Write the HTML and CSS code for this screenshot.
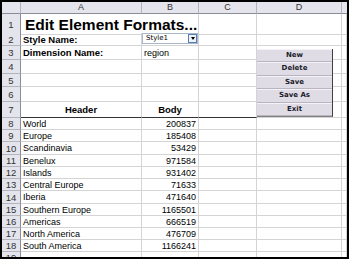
FILE: index.html
```html
<!DOCTYPE html>
<html>
<head>
    <meta http-equiv="Content-Type" content="text/html; charset=UTF-8">
    <title>Edit Element Formats</title>
    <link rel="stylesheet" href="styles.css">
</head>
<body>
    <div class="sheet">
        <div class="row colhead">
            <div class="corner"></div>
            <div class="ch">A</div>
            <div class="ch">B</div>
            <div class="ch">C</div>
            <div class="ch">D</div>
            <div class="ch"></div>
        </div>
        <div class="row r1">
            <div class="rh">1</div>
            <div class="cell title">Edit Element Formats...</div>
            <div class="cell"></div>
            <div class="cell"></div>
            <div class="cell"></div>
        </div>
        <div class="row r2">
            <div class="rh">2</div>
            <div class="cell label">Style Name:</div>
            <div class="cell">
                <div class="combo">
                    <span class="combo-text">Style1</span>
                    <span class="combo-btn"><span class="tri"></span></span>
                </div>
            </div>
            <div class="cell"></div>
            <div class="cell"></div>
            <div class="cell"></div>
        </div>
        <div class="row r3">
            <div class="rh">3</div>
            <div class="cell label">Dimension Name:</div>
            <div class="cell">region</div>
            <div class="cell"></div>
            <div class="cell"></div>
            <div class="cell"></div>
        </div>
        <div class="row r4">
            <div class="rh">4</div>
            <div class="cell"></div><div class="cell"></div><div class="cell"></div><div class="cell"></div><div class="cell"></div>
        </div>
        <div class="row r5">
            <div class="rh">5</div>
            <div class="cell"></div><div class="cell"></div><div class="cell"></div><div class="cell"></div><div class="cell"></div>
        </div>
        <div class="row r6">
            <div class="rh">6</div>
            <div class="cell"></div><div class="cell"></div><div class="cell"></div><div class="cell"></div><div class="cell"></div>
        </div>
        <div class="row r7">
            <div class="rh">7</div>
            <div class="cell head">Header</div>
            <div class="cell head">Body</div>
            <div class="cell head"></div>
            <div class="cell"></div>
            <div class="cell"></div>
        </div>
        <div class="row data">
            <div class="rh">8</div>
            <div class="cell">World</div><div class="cell num">200837</div><div class="cell"></div><div class="cell"></div><div class="cell"></div>
        </div>
        <div class="row data">
            <div class="rh">9</div>
            <div class="cell">Europe</div><div class="cell num">185408</div><div class="cell"></div><div class="cell"></div><div class="cell"></div>
        </div>
        <div class="row data tall">
            <div class="rh">10</div>
            <div class="cell">Scandinavia</div><div class="cell num">53429</div><div class="cell"></div><div class="cell"></div><div class="cell"></div>
        </div>
        <div class="row data">
            <div class="rh">11</div>
            <div class="cell">Benelux</div><div class="cell num">971584</div><div class="cell"></div><div class="cell"></div><div class="cell"></div>
        </div>
        <div class="row data">
            <div class="rh">12</div>
            <div class="cell">Islands</div><div class="cell num">931402</div><div class="cell"></div><div class="cell"></div><div class="cell"></div>
        </div>
        <div class="row data">
            <div class="rh">13</div>
            <div class="cell">Central Europe</div><div class="cell num">71633</div><div class="cell"></div><div class="cell"></div><div class="cell"></div>
        </div>
        <div class="row data tall">
            <div class="rh">14</div>
            <div class="cell">Iberia</div><div class="cell num">471640</div><div class="cell"></div><div class="cell"></div><div class="cell"></div>
        </div>
        <div class="row data">
            <div class="rh">15</div>
            <div class="cell">Southern Europe</div><div class="cell num">1165501</div><div class="cell"></div><div class="cell"></div><div class="cell"></div>
        </div>
        <div class="row data">
            <div class="rh">16</div>
            <div class="cell">Americas</div><div class="cell num">666519</div><div class="cell"></div><div class="cell"></div><div class="cell"></div>
        </div>
        <div class="row data">
            <div class="rh">17</div>
            <div class="cell">North America</div><div class="cell num">476709</div><div class="cell"></div><div class="cell"></div><div class="cell"></div>
        </div>
        <div class="row data">
            <div class="rh">18</div>
            <div class="cell">South America</div><div class="cell num">1166241</div><div class="cell"></div><div class="cell"></div><div class="cell"></div>
        </div>
        <div class="row data">
            <div class="rh">19</div>
            <div class="cell"></div><div class="cell"></div><div class="cell"></div><div class="cell"></div><div class="cell"></div>
        </div>

        <div class="buttons">
            <div class="btn">New</div>
            <div class="btn">Delete</div>
            <div class="btn">Save</div>
            <div class="btn">Save As</div>
            <div class="btn">Exit</div>
        </div>
    </div>
</body>
</html>
```

FILE: styles.css
```css
body {
    margin: 0;
    background: #fff;
    font-family: "Liberation Sans", Arial, sans-serif;
}

.sheet {
    position: relative;
    width: 345px;
    height: 255px;
    border: 2px solid #000;
    overflow: hidden;
    font-size: 9px;
    color: #000;
}

.row {
    display: grid;
    grid-template-columns: 19px 121px 57px 58px 85px 1fr;
    height: 12px;
}

.row > div {
    box-sizing: border-box;
    border-right: 1px solid #d4d4d4;
    border-bottom: 1px solid #d4d4d4;
    white-space: nowrap;
    overflow: hidden;
}

/* column letters */
.colhead > div {
    background: #e4e4ec;
    border-right: 1px solid #b4b4bc;
    border-bottom: 1px solid #8c8c98;
    color: #333;
    text-align: center;
    line-height: 11px;
}

.colhead .ch:last-child {
    border-right: none;
}

/* row numbers */
.rh {
    background: #e4e4ec;
    text-align: center;
    color: #333;
    font-size: 9.5px;
    display: flex;
    align-items: center;
    justify-content: center;
}

.row > .rh {
    border-right: 1px solid #8c8c98;
    border-bottom: 1px solid #b4b4bc;
}

.cell {
    padding: 0 2px;
    display: flex;
    align-items: center;
}

.r1 { height: 19px; }
.r2 { height: 13px; }
.r3 { height: 14px; }
.r4 { height: 14px; }
.r5 { height: 13px; }
.r6 { height: 15px; }
.r7 { height: 16px; }
.data.tall { height: 13px; }

.row > .title {
    grid-column: span 2;
    font-size: 15.5px;
    font-weight: bold;
    padding-left: 4px;
    padding-top: 2px;
    overflow: visible;
}

.label {
    font-weight: bold;
    font-size: 9.5px;
}

.row > .head {
    justify-content: center;
    font-weight: bold;
    font-size: 9.5px;
    border-bottom: 1px solid #333;
}

.num {
    justify-content: flex-end;
}

/* style picker in B2 */
.row > .cell:has(.combo) {
    padding: 0;
    align-items: flex-start;
}

.combo {
    display: flex;
    width: 56px;
    height: 11px;
    box-sizing: border-box;
    border: 1px solid #a8b8c8;
    background: #fff;
}

.combo-text {
    flex: 1;
    font-family: "DejaVu Sans", sans-serif;
    font-size: 7px;
    line-height: 9px;
    padding-left: 3px;
}

.combo-btn {
    width: 9px;
    box-sizing: border-box;
    border: 1px solid #5a7eb4;
    background: #eef2f8;
    display: flex;
    align-items: center;
    justify-content: center;
}

.tri {
    width: 0;
    height: 0;
    border-left: 2.5px solid transparent;
    border-right: 2.5px solid transparent;
    border-top: 3px solid #000;
}

/* macro buttons floating over column D */
.buttons {
    position: absolute;
    left: 255px;
    top: 47px;
    width: 75px;
    display: flex;
    flex-direction: column;
    border-right: 1px solid #404040;
    border-bottom: 1px solid #808080;
}

.btn {
    height: 13.4px;
    box-sizing: border-box;
    background: #e0dce6;
    border-top: 1px solid #f4f2f8;
    border-bottom: 1px solid #b8b4c0;
    font-family: "DejaVu Sans", sans-serif;
    font-weight: bold;
    font-size: 7px;
    color: #1c1c2c;
    text-align: center;
    line-height: 11px;
}
```
